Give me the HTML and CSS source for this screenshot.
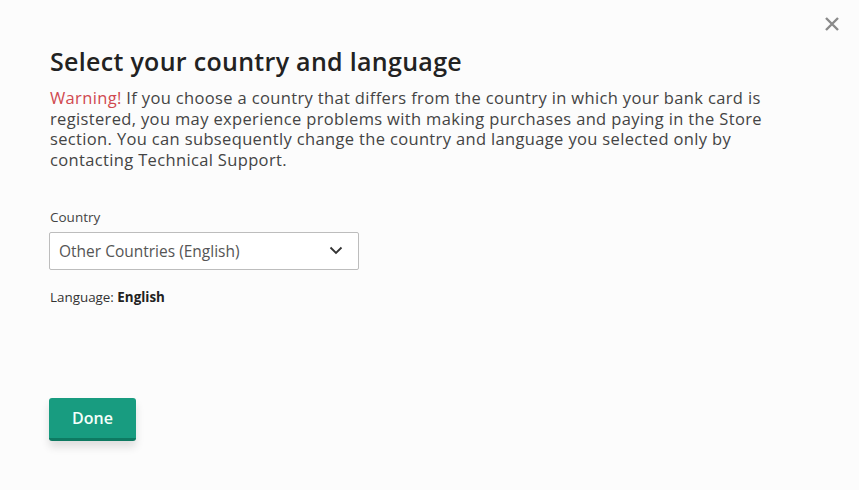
FILE: index.html
```html
<!DOCTYPE html>
<html lang="en">
<head>
<meta charset="utf-8">
<title>Select your country and language</title>
<link rel="stylesheet" href="styles.css">
</head>
<body>
<div class="dialog">
  <button class="close" aria-label="Close">
    <svg width="16" height="16" viewBox="0 0 16 16"><path d="M2 2 L14 14 M14 2 L2 14" stroke="#8a8a8a" stroke-width="2.4" stroke-linecap="butt"/></svg>
  </button>
  <h1 class="title">Select your country and language</h1>
  <p class="notice"><span class="warn">Warning!</span> If you choose a country that differs from the country in which your bank card is registered, you may experience problems with making purchases and paying in the Store section. You can subsequently change the country and language you selected only by contacting Technical Support.</p>
  <div class="field">
    <label class="label">Country</label>
    <div class="select">
      <span class="value">Other Countries (English)</span>
      <svg width="14" height="9" viewBox="0 0 14 9"><path d="M1.5 1.5 L7 7 L12.5 1.5" fill="none" stroke="#333" stroke-width="1.8"/></svg>
    </div>
  </div>
  <p class="lang">Language: <b>English</b></p>
  <div class="actions">
    <button class="done">Done</button>
  </div>
</div>
</body>
</html>
```

FILE: styles.css
```css
html, body {
  margin: 0;
  padding: 0;
  background: #fcfcfc;
}
body {
  font-family: "Open Sans", "Liberation Sans", sans-serif;
  color: #3a3a3a;
}
.dialog {
  position: relative;
  width: 859px;
  height: 490px;
  box-sizing: border-box;
  padding: 44px 50px 0 50px;
  display: flex;
  flex-direction: column;
}
.close {
  position: absolute;
  top: 16px;
  right: 19px;
  width: 16px;
  height: 16px;
  padding: 0;
  border: 0;
  background: none;
  display: flex;
}
.title {
  margin: 0;
  font-size: 25px;
  line-height: 34px;
  font-weight: 600;
  letter-spacing: 0.3px;
  color: #222;
}
.notice {
  margin: 10px 0 0 0;
  font-size: 16.5px;
  line-height: 20.7px;
  letter-spacing: 0.35px;
  color: #444;
  width: 735px;
}
.warn {
  display: inline-block;
  line-height: 20.7px;
  color: #d0494f;
}
.field {
  margin-top: 37px;
  display: flex;
  flex-direction: column;
}
.label {
  font-size: 13.5px;
  line-height: 18px;
  color: #444;
}
.select {
  margin-top: 6px;
  margin-left: -1px;
  width: 310px;
  height: 38px;
  box-sizing: border-box;
  border: 1px solid #bdbdbd;
  border-radius: 2px;
  background: #fff;
  display: flex;
  align-items: center;
  justify-content: space-between;
  padding: 0 15px 0 9px;
}
.value {
  font-size: 15.5px;
  color: #555;
}
.lang {
  margin: 19px 0 0 0;
  font-size: 13.4px;
  line-height: 16px;
  color: #333;
}
.lang b {
  font-weight: 700;
  color: #222;
}
.actions {
  margin-top: 93px;
  display: flex;
}
.done {
  margin-left: -1px;
  width: 87px;
  height: 43px;
  border: 0;
  border-bottom: 3px solid #0e7a62;
  border-radius: 3px;
  background: #189c80;
  color: #f4fffb;
  font-family: "Open Sans", "Liberation Sans", sans-serif;
  font-size: 16px;
  font-weight: 600;
  box-shadow: 0 6px 8px rgba(0,0,0,0.12);
}
```
